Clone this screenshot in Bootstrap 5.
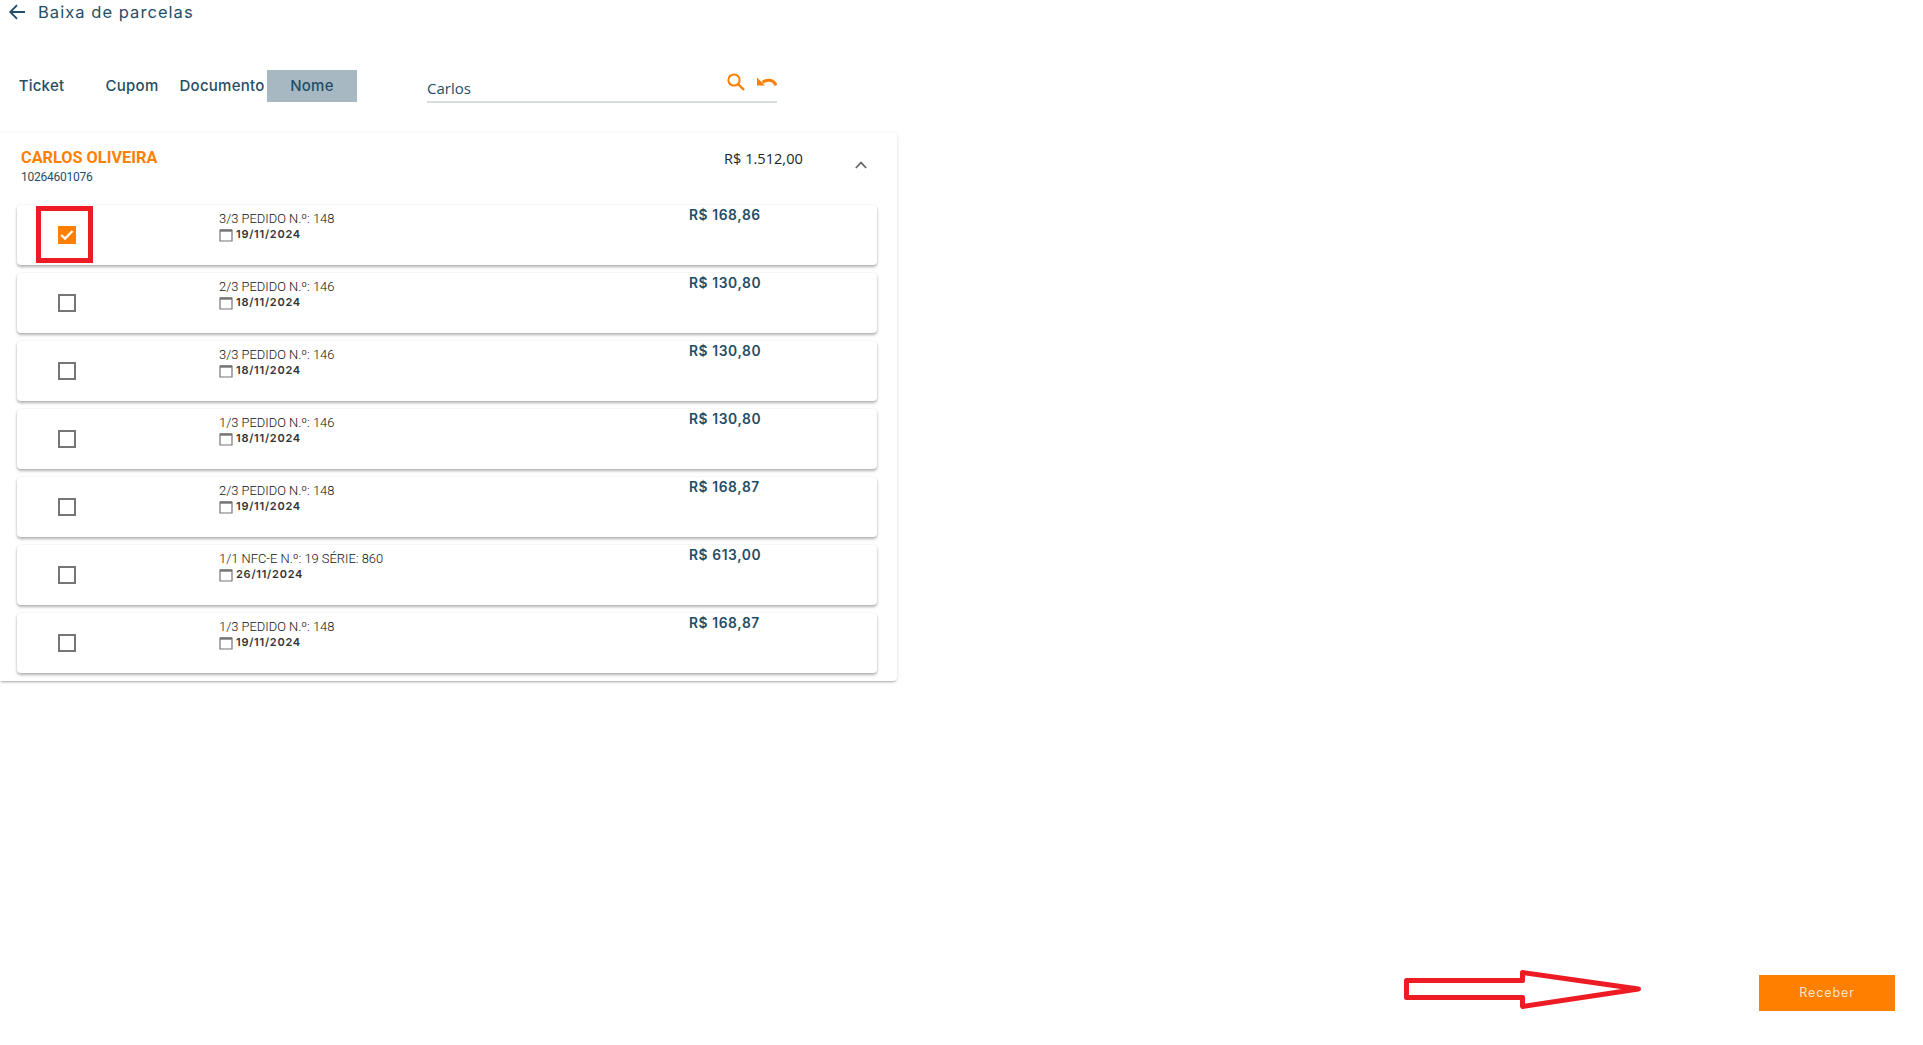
<!DOCTYPE html>
<html lang="pt-BR">
<head>
<meta charset="utf-8">
<title>Baixa de parcelas</title>
<link href="https://cdn.jsdelivr.net/npm/bootstrap@5.3.0/dist/css/bootstrap.min.css" rel="stylesheet">
<style>
html,body{height:100%;overflow:hidden}
body{background:#fff;font-family:"Inter","Liberation Sans",sans-serif;color:#1f4e66}
.page-wrap{height:1045px}
.top-title{height:24px;padding-left:9px;gap:13px;color:#1f4e66;font-size:16.5px;letter-spacing:1.05px;font-weight:400;line-height:24px}
.filter-row{margin-top:46px;height:32px}
.tab-cell{width:90px;height:32px;border:0;background:transparent;padding:1px 0 0;color:#1f4e66;font-size:15px;font-weight:500;font-family:"Inter","Liberation Sans",sans-serif;letter-spacing:.25px}
.tab-cell.first-cell{width:87px;padding-right:4px}
.tab-cell.on-cell{background:#a7b8c2}
.search-box{width:350px;margin-left:70px;height:33px;border-bottom:2px solid #d8dde0;position:relative}
.search-text{font-family:"Open Sans","Liberation Sans",sans-serif;font-size:15px;line-height:20px;padding-top:8px;color:#1f4e66}
.search-tools{gap:11px;padding-top:3px}
.panel-box{margin-top:31px;width:897px;height:548px;border:0;border-radius:0 4px 4px 0;box-shadow:0 2px 2px -1px rgba(0,0,0,.25),0 1px 4px rgba(0,0,0,.12);padding:0 20px 0 17px}
.panel-head{height:72px}
.person-block{padding-left:4px;padding-top:15px}
.person-name{font-family:"Roboto","Liberation Sans",sans-serif;font-weight:700;color:#ff7f00;font-size:16.3px;line-height:20px}
.person-doc{font-family:"Roboto","Liberation Sans",sans-serif;font-size:12px;line-height:16px;color:#1f4e66;letter-spacing:-.25px;padding-top:1px}
.person-total{font-family:"Open Sans","Liberation Sans",sans-serif;font-size:14.6px;color:#212529;line-height:20px;width:81px;margin-left:auto;padding-top:15px;white-space:nowrap}
.chevron-cell{width:72px;padding-left:50px;padding-top:18px}
.row-card{height:60px;margin-bottom:8px;border:0;border-radius:4px;box-shadow:0 2px 3px rgba(0,0,0,.3),0 0 2px rgba(0,0,0,.08);flex-direction:row;position:relative}
.check-cell{width:202px;padding-left:41px}
.check-mark{width:18px;height:18px;border:2.5px solid #757575;display:block}
.check-mark.is-on{background:#ff7f00;border-color:#ff7f00}
.info-cell{width:470px;padding-top:6px}
.info-line{font-family:"Roboto","Liberation Sans",sans-serif;font-weight:300;font-size:12.9px;line-height:16px;color:#111;white-space:nowrap}
.date-line{font-family:"Inter","Liberation Sans",sans-serif;font-weight:600;font-size:11px;line-height:15px;letter-spacing:.75px;color:#333;gap:3px}
.value-cell{font-family:"Inter","Liberation Sans",sans-serif;font-weight:600;font-size:13.8px;letter-spacing:.6px;color:#1f4e66;line-height:20px;white-space:nowrap}
.foot-row{margin-top:auto;padding:0 28px 34px 0;position:relative}
.go-btn{width:136px;height:36px;background:#ff7f00;color:#ffe3c6;border:0;border-radius:0;font-size:12.5px;letter-spacing:.9px;padding:1px 0 0}
.go-btn:hover{background:#ff7f00;color:#ffe3c6}
.red-frame{position:absolute;left:19px;top:1px;width:57px;height:57px;border:5px solid #ed1c24;pointer-events:none}
.red-arrow{position:absolute;left:1403px;bottom:33px;width:240px;height:44px}
</style>
</head>
<body>
<div class="page-wrap d-flex flex-column">
  <div class="top-title d-flex align-items-center">
    <svg width="16" height="16" viewBox="0 0 16 16" fill="none" stroke="#1f4e66" stroke-width="1.8"><path d="M16 8H1.5M8 1.2 1.3 8 8 14.8"/></svg>
    <span>Baixa de parcelas</span>
  </div>

  <div class="filter-row d-flex">
    <button class="tab-cell first-cell" type="button">Ticket</button>
    <button class="tab-cell" type="button">Cupom</button>
    <button class="tab-cell" type="button">Documento</button>
    <button class="tab-cell on-cell" type="button">Nome</button>
    <div class="search-box d-flex justify-content-between">
      <div class="search-text">Carlos</div>
      <div class="search-tools d-flex">
        <svg width="18" height="18" viewBox="0 0 18 18" fill="none" stroke="#ff7f00" stroke-width="2"><circle cx="7" cy="7" r="5.6"/><path d="M11 11l6 6" stroke-width="2.4"/></svg>
        <svg width="21" height="18" viewBox="0 0 21 18" fill="none"><path d="M20 12.5C18.6 8.8 15.6 7.2 12.5 7.2c-2.4 0-4.4.8-6 2.2" stroke="#ff7f00" stroke-width="3"/><path d="M1 4.5v8h8z" fill="#ff7f00"/></svg>
      </div>
    </div>
  </div>

  <div class="card panel-box">
    <div class="panel-head d-flex">
      <div class="person-block">
        <div class="person-name">CARLOS OLIVEIRA</div>
        <div class="person-doc">10264601076</div>
      </div>
      <div class="person-total">R$ 1.512,00</div>
      <div class="chevron-cell">
        <svg width="12" height="8" viewBox="0 0 12 8" fill="none" stroke="#666" stroke-width="1.7"><path d="M.8 7 6 1.6 11.2 7"/></svg>
      </div>
    </div>

    <div class="card row-card">
      <div class="check-cell d-flex align-items-center">
        <span class="check-mark is-on d-flex align-items-center justify-content-center">
          <svg width="14" height="14" viewBox="0 0 14 14" fill="none" stroke="#fff" stroke-width="2.4"><path d="M1.2 7 5 10.6 12.6 3"/></svg>
        </span>
      </div>
      <div class="info-cell">
        <div class="info-line">3/3 PEDIDO N.º: 148</div>
        <div class="date-line d-flex align-items-center"><svg width="14" height="14" viewBox="0 0 14 14" fill="none" stroke="#757575"><path d="M1 2h12v11H1z" stroke-width="1.2"/><path d="M1 2.5h12" stroke-width="2.4"/></svg>19/11/2024</div>
      </div>
      <div class="value-cell">R$ 168,86</div>
      <div class="red-frame"></div>
    </div>

    <div class="card row-card">
      <div class="check-cell d-flex align-items-center"><span class="check-mark"></span></div>
      <div class="info-cell">
        <div class="info-line">2/3 PEDIDO N.º: 146</div>
        <div class="date-line d-flex align-items-center"><svg width="14" height="14" viewBox="0 0 14 14" fill="none" stroke="#757575"><path d="M1 2h12v11H1z" stroke-width="1.2"/><path d="M1 2.5h12" stroke-width="2.4"/></svg>18/11/2024</div>
      </div>
      <div class="value-cell">R$ 130,80</div>
    </div>

    <div class="card row-card">
      <div class="check-cell d-flex align-items-center"><span class="check-mark"></span></div>
      <div class="info-cell">
        <div class="info-line">3/3 PEDIDO N.º: 146</div>
        <div class="date-line d-flex align-items-center"><svg width="14" height="14" viewBox="0 0 14 14" fill="none" stroke="#757575"><path d="M1 2h12v11H1z" stroke-width="1.2"/><path d="M1 2.5h12" stroke-width="2.4"/></svg>18/11/2024</div>
      </div>
      <div class="value-cell">R$ 130,80</div>
    </div>

    <div class="card row-card">
      <div class="check-cell d-flex align-items-center"><span class="check-mark"></span></div>
      <div class="info-cell">
        <div class="info-line">1/3 PEDIDO N.º: 146</div>
        <div class="date-line d-flex align-items-center"><svg width="14" height="14" viewBox="0 0 14 14" fill="none" stroke="#757575"><path d="M1 2h12v11H1z" stroke-width="1.2"/><path d="M1 2.5h12" stroke-width="2.4"/></svg>18/11/2024</div>
      </div>
      <div class="value-cell">R$ 130,80</div>
    </div>

    <div class="card row-card">
      <div class="check-cell d-flex align-items-center"><span class="check-mark"></span></div>
      <div class="info-cell">
        <div class="info-line">2/3 PEDIDO N.º: 148</div>
        <div class="date-line d-flex align-items-center"><svg width="14" height="14" viewBox="0 0 14 14" fill="none" stroke="#757575"><path d="M1 2h12v11H1z" stroke-width="1.2"/><path d="M1 2.5h12" stroke-width="2.4"/></svg>19/11/2024</div>
      </div>
      <div class="value-cell">R$ 168,87</div>
    </div>

    <div class="card row-card">
      <div class="check-cell d-flex align-items-center"><span class="check-mark"></span></div>
      <div class="info-cell">
        <div class="info-line">1/1 NFC-E N.º: 19 SÉRIE: 860</div>
        <div class="date-line d-flex align-items-center"><svg width="14" height="14" viewBox="0 0 14 14" fill="none" stroke="#757575"><path d="M1 2h12v11H1z" stroke-width="1.2"/><path d="M1 2.5h12" stroke-width="2.4"/></svg>26/11/2024</div>
      </div>
      <div class="value-cell">R$ 613,00</div>
    </div>

    <div class="card row-card">
      <div class="check-cell d-flex align-items-center"><span class="check-mark"></span></div>
      <div class="info-cell">
        <div class="info-line">1/3 PEDIDO N.º: 148</div>
        <div class="date-line d-flex align-items-center"><svg width="14" height="14" viewBox="0 0 14 14" fill="none" stroke="#757575"><path d="M1 2h12v11H1z" stroke-width="1.2"/><path d="M1 2.5h12" stroke-width="2.4"/></svg>19/11/2024</div>
      </div>
      <div class="value-cell">R$ 168,87</div>
    </div>
  </div>

  <div class="foot-row d-flex justify-content-end">
    <svg class="red-arrow" viewBox="0 0 240 44" fill="none" stroke="#ed1c24" stroke-width="5" stroke-linejoin="round"><path d="M3.5 12.5H119.5V4.5L235.5 21 119.5 38.5V29.5H3.5Z"/></svg>
    <button class="btn go-btn" type="button">Receber</button>
  </div>
</div>
<script src="https://cdn.jsdelivr.net/npm/bootstrap@5.3.0/dist/js/bootstrap.bundle.min.js"></script>
</body>
</html>
